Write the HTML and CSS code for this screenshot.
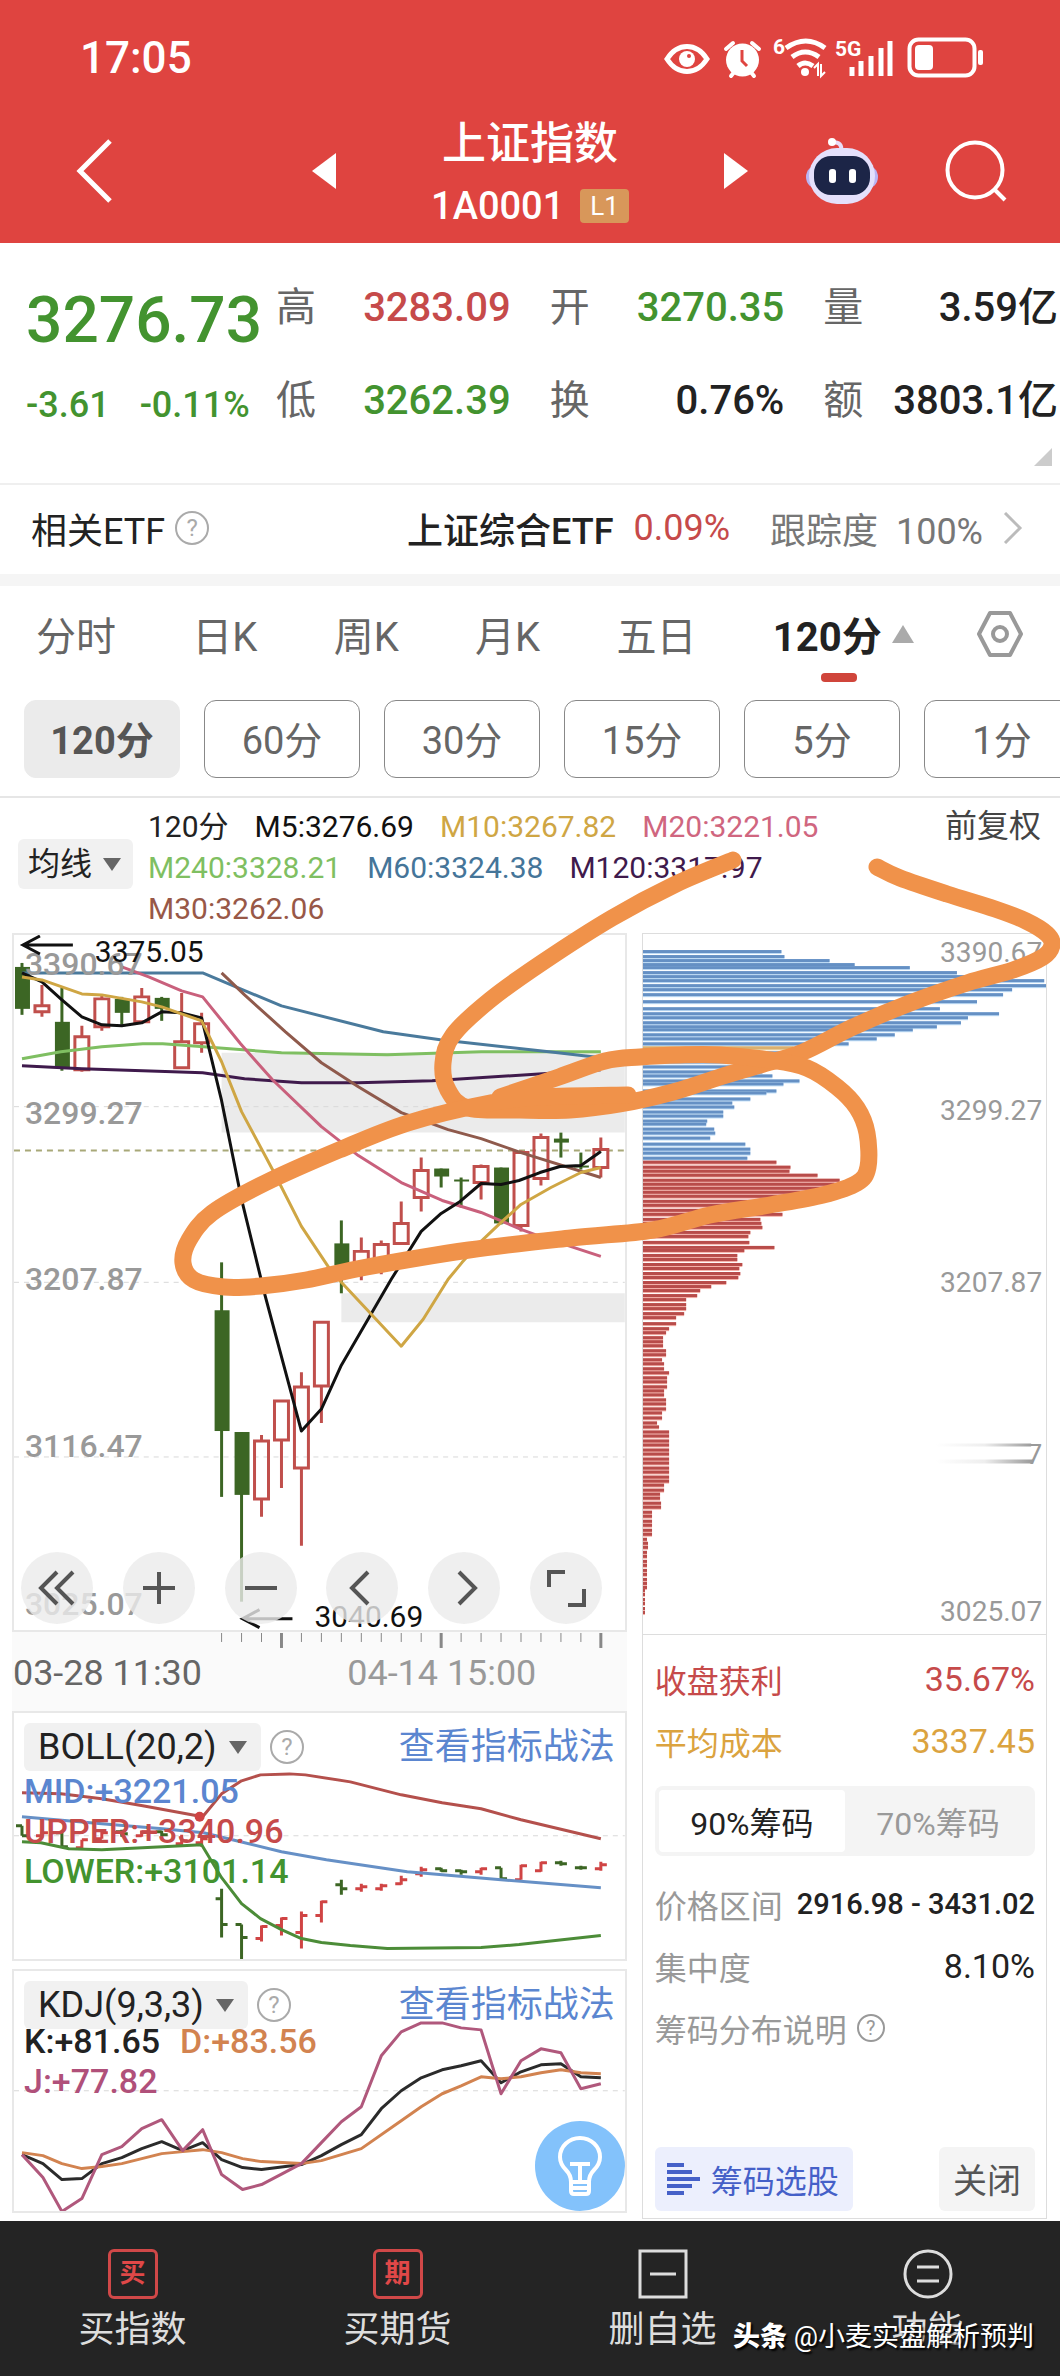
FILE: index.html
```html
<!DOCTYPE html>
<html lang="zh-CN">
<head>
    <meta charset="UTF-8">
    <meta name="viewport" content="width=device-width, initial-scale=1.0">
    <title>上证指数 1A0001</title>
    <link rel="stylesheet" href="styles.css">
</head>
<body>

    <header class="header">
        <div class="status">
            <span class="time">17:05</span>
            <svg class="status-icons" width="320" height="44" viewBox="664 36 320 44">
                <g fill="none" stroke="#fff" stroke-width="5">
                    <path d="M667 59q8-12.500 20-12.500t20 12.500q-8 12.500-20 12.500t-20-12.500z"/>
                    <path d="M726 49l7-6M759 49l-7-6M731 76l4-5M754 76l-4-5" stroke-width="4" stroke-linecap="round"/>
                </g>
                <circle cx="687" cy="59" r="8" fill="#fff"/>
                <circle cx="689" cy="56" r="2" fill="#df4440"/>
                <circle cx="742.500" cy="60" r="16.500" fill="#fff"/>
                <path d="M742 50v11l5 5" fill="none" stroke="#df4440" stroke-width="3"/>
                <text x="773" y="54" class="st-small">6</text>
                <g fill="none" stroke="#fff" stroke-width="5">
                    <path d="M786 48q20-14 39 0"/>
                    <path d="M792 57q13-10 27 0"/>
                    <path d="M798 66q7-6 15 0" />
                </g>
                <circle cx="805" cy="72" r="4" fill="#fff"/>
                <path d="M814 68l4-4v12M821 64v12l4-4" fill="none" stroke="#fff" stroke-width="2"/>
                <text x="835" y="56" class="st-small">5G</text>
                <path d="M852 67v9M861 61v15M871 56v20M881 48v28M890 41v35" stroke="#fff" stroke-width="5"/>
                <rect x="909.500" y="39.500" width="65" height="36" rx="9" fill="none" stroke="#fff" stroke-width="4"/>
                <rect x="915" y="45" width="18" height="25" rx="4" fill="#fff"/>
                <rect x="978" y="50" width="5" height="15" rx="2" fill="#fff"/>
            </svg>
        </div>
        <div class="title-row">
            <button class="icon-btn back" aria-label="返回">
                <svg width="40" height="66" viewBox="0 0 40 66"><path d="M36 3L6 33l30 30" fill="none" stroke="#fff" stroke-width="5"/></svg>
            </button>
            <div class="title-mid">
                <button class="icon-btn" aria-label="上一个"><svg width="24" height="36"><path d="M24 0v36L0 18z" fill="#fff"/></svg></button>
                <div class="title-text">
                    <h1>上证指数</h1>
                    <p>1A0001<span class="level">L1</span></p>
                </div>
                <button class="icon-btn" aria-label="下一个"><svg width="24" height="36"><path d="M0 0v36l24-18z" fill="#fff"/></svg></button>
            </div>
            <div class="title-right">
                <button class="icon-btn" aria-label="智能助手">
                    <svg width="74" height="68" viewBox="0 0 74 68">
                        <path d="M36 14q2-9-9-9" fill="none" stroke="#e9ddf8" stroke-width="4"/>
                        <circle cx="27" cy="5" r="4" fill="#fff"/>
                        <rect x="1" y="28" width="72" height="24" rx="12" fill="#b9b4f3"/>
                        <rect x="4" y="11" width="66" height="56" rx="28" fill="#e4e0fb"/>
                        <rect x="9" y="19" width="56" height="39" rx="17" fill="#1c2547"/>
                        <rect x="24" y="32" width="7" height="14" rx="3" fill="#fff"/>
                        <rect x="44" y="32" width="7" height="14" rx="3" fill="#fff"/>
                    </svg>
                </button>
                <button class="icon-btn" aria-label="搜索">
                    <svg width="62" height="62" viewBox="0 0 62 62"><g fill="none" stroke="#fff" stroke-width="4"><circle cx="30" cy="30" r="27.500"/><path d="M49 49l11 11"/></g></svg>
                </button>
            </div>
        </div>
    </header>

    <section class="quote">
        <div class="quote-main green">
            <div class="price">3276.73</div>
            <div class="change"><span>-3.61</span><span>-0.11%</span></div>
        </div>
        <div class="quote-grid">
            <div class="field"><span class="name">高</span><span class="red">3283.09</span></div>
            <div class="field"><span class="name">开</span><span class="green">3270.35</span></div>
            <div class="field"><span class="name">量</span><span>3.59亿</span></div>
            <div class="field"><span class="name">低</span><span class="green">3262.39</span></div>
            <div class="field"><span class="name">换</span><span>0.76%</span></div>
            <div class="field"><span class="name">额</span><span>3803.1亿</span></div>
        </div>
        <span class="corner"></span>
    </section>

    <section class="etf">
        <span>相关ETF</span>
        <button class="help" aria-label="说明">?</button>
        <a class="etf-link" href="#"><b>上证综合ETF</b><span class="red">0.09%</span><span class="track">跟踪度&nbsp; 100%</span>
            <svg width="20" height="32" viewBox="0 0 20 32"><path d="M2 1l15 15L2 31" fill="none" stroke="#bbb" stroke-width="3"/></svg>
        </a>
    </section>

    <nav class="tabs">
        <button>分时</button>
        <button>日K</button>
        <button>周K</button>
        <button>月K</button>
        <button>五日</button>
        <button class="on">120分<i class="up"></i></button>
        <button aria-label="设置">
            <svg width="48" height="48" viewBox="0 0 48 48"><g fill="none" stroke="#999" stroke-width="4"><path d="M14 3h20l11 21-11 21H14L3 24z" stroke-linejoin="round"/><circle cx="24" cy="24" r="7"/></g></svg>
        </button>
    </nav>

    <div class="periods">
        <button class="on">120分</button>
        <button>60分</button>
        <button>30分</button>
        <button>15分</button>
        <button>5分</button>
        <button>1分</button>
    </div>

    <main class="chart-area">
        <div class="legend">
            <label class="pick pick-ma"><select aria-label="主图指标"><option>均线</option></select></label>
            <div class="ma">
                <span>120分</span>
                <span class="m5">M5:3276.69</span>
                <span class="m10">M10:3267.82</span>
                <span class="m20">M20:3221.05</span>
                <span class="m240">M240:3328.21</span>
                <span class="m60">M60:3324.38</span>
                <span class="m120">M120:3317.97</span>
                <span class="m30">M30:3262.06</span>
            </div>
            <span class="adjust">前复权</span>
        </div>

        <div class="charts">
            <div class="left">
                <div class="panel kline">
                    <svg class="plot" viewBox="14 935 612 696">
                        <path d="M222 1053h404v80H222zM342 1294h284v29H342z" fill="#ebebeb"/>
                        <path d="M14 1107h612M14 1283h612M14 1458h612" class="grid-line"/>
                        <path d="M14 1151h612" stroke="#a8a878" stroke-width="2" stroke-dasharray="6 5"/>
                        <g id="candles"></g>
                        <g class="line">
                            <path stroke="#7fbf62" d="M22 1059L61 1052 102 1047 143 1044 163 1044 204 1047 282 1053 388 1055 482 1052 602 1052"/>
                            <path stroke="#3f1a4c" d="M22 1066L82 1069 143 1071 203 1073 245 1079 302 1083 359 1083 433 1081 559 1073 602 1070"/>
                            <path stroke="#4a7a9c" d="M22 973H203L241 989 282 1006 384 1032 441 1040 559 1053 602 1058"/>
                            <path stroke="#8f5a4c" d="M222 973L245 995 286 1032 322 1063 359 1087 402 1113 449 1130 482 1139 522 1153 602 1178"/>
                            <path stroke="#c9607c" d="M122 967L149 977 182 991 203 997 241 1044 273 1080 322 1127 359 1156 402 1183 443 1201 482 1213 522 1230 541 1237 602 1257"/>
                            <path stroke="#111" d="M22 973L42 982 62 1000 82 1017 102 1025 122 1026 142 1023 162 1012 182 1013 202 1018 222 1101 242 1200 265 1294 302 1432 322 1410 342 1366 392 1280 422 1232 442 1214 461 1202 482 1184 502 1185 520 1181 541 1173 561 1167 582 1166 602 1152"/>
                            <path stroke="#cfa644" d="M22 977L42 980 82 994 102 995 142 1002 162 1007 182 1014 202 1021 222 1062 242 1112 273 1170 302 1227 330 1269 342 1283 372 1315 402 1347 424 1320 449 1280 463 1263 482 1242 502 1223 522 1205 552 1188 582 1173 602 1168"/>
                        </g>
                        <g class="axis-text">
                            <text x="25" y="975">3390.67</text>
                            <text x="25" y="1124">3299.27</text>
                            <text x="25" y="1291">3207.87</text>
                            <text x="25" y="1458">3116.47</text>
                            <text x="25" y="1616">3025.07</text>
                        </g>
                        <g class="mark-text">
                            <text x="95" y="962">3375.05</text>
                            <text x="315" y="1628">3040.69</text>
                            <path d="M73 945H23M40 936L23 945l17 9M293 1620h-50M260 1611l-17 9 17 9"/>
                        </g>
                    </svg>
                    <div class="tools">
                        <button aria-label="收起"><svg viewBox="0 0 72 72"><path d="M36 20L20 36l16 16M52 20L36 36l16 16"/></svg></button>
                        <button aria-label="放大"><svg viewBox="0 0 72 72"><path d="M36 20v32M20 36h32"/></svg></button>
                        <button aria-label="缩小"><svg viewBox="0 0 72 72"><path d="M20 36h32"/></svg></button>
                        <button aria-label="左移"><svg viewBox="0 0 72 72"><path d="M42 20L26 36l16 16"/></svg></button>
                        <button aria-label="右移"><svg viewBox="0 0 72 72"><path d="M31 20l16 16-16 16"/></svg></button>
                        <button aria-label="全屏"><svg viewBox="0 0 72 72"><path d="M35 20H19v15M54 37v16H38"/></svg></button>
                    </div>
                </div>

                <svg class="time-axis" viewBox="12 1633 616 80">
                    <g id="ticks"></g>
                    <text x="13" y="1686" fill="#666">03-28 11:30</text>
                    <text x="348" y="1686" fill="#999">04-14 15:00</text>
                </svg>

                <div class="panel">
                    <svg class="plot" viewBox="14 1715 612 246">
                        <path d="M14 1838h612" class="grid-line"/>
                        <g id="ohlc"></g>
                        <g class="line">
                            <path stroke="#b4504c" d="M22 1795L61 1796 102 1801 143 1808 203 1819 222 1796 242 1783 261 1777 290 1776 306 1777 351 1784 402 1797 443 1805 482 1811 522 1822 602 1841"/>
                            <path stroke="#6690c6" d="M22 1819L102 1826 163 1831 204 1835 241 1844 282 1854 327 1862 408 1874 502 1882 602 1890"/>
                            <path stroke="#4c8c38" d="M22 1844L41 1845 69 1851 102 1852 163 1849 202 1847 222 1880 242 1906 261 1921 282 1932 302 1941 322 1945 351 1948 388 1951 482 1950 520 1947 602 1938"/>
                        </g>
                        <circle cx="200" cy="1819" r="5" fill="#d04444"/>
                    </svg>
                    <div class="panel-info">
                        <div class="panel-head">
                            <label class="pick"><select aria-label="副图指标一"><option>BOLL(20,2)</option></select></label>
                            <button class="help" aria-label="BOLL说明">?</button>
                            <a href="#">查看指标战法</a>
                        </div>
                        <p class="blue">MID:+3221.05</p>
                        <p class="red">UPPER:+3340.96</p>
                        <p class="green">LOWER:+3101.14</p>
                    </div>
                </div>

                <div class="panel kdj">
                    <svg class="plot" viewBox="14 1973 612 240">
                        <path d="M14 2093h612" class="grid-line"/>
                        <g class="line">
                            <path stroke="#2b2b2b" d="M22 2157L43 2166 62 2182 82 2181 102 2166 122 2160 142 2151 162 2144 183 2153 203 2145 222 2162 243 2170 262 2172 302 2167 322 2158 342 2147 362 2137 382 2111 402 2093 422 2080 443 2072 462 2068 482 2063 502 2085 522 2074 542 2067 562 2066 582 2079 602 2080"/>
                            <path stroke="#d28350" d="M22 2155L43 2158 62 2166 82 2171 102 2169 122 2166 162 2156 183 2154 203 2152 222 2155 243 2161 262 2164 283 2165 302 2166 322 2163 362 2151 402 2123 422 2109 443 2096 462 2088 482 2079 502 2081 522 2079 542 2075 562 2072 582 2075 602 2076"/>
                            <path stroke="#b0587c" d="M22 2157L43 2180 62 2214 82 2201 102 2157 122 2149 142 2131 162 2122 183 2153 203 2132 222 2177 243 2192 262 2187 283 2176 302 2166 322 2145 342 2124 362 2109 382 2058 402 2034 422 2025 443 2025 462 2030 482 2032 502 2096 522 2063 542 2051 562 2055 582 2091 602 2086"/>
                        </g>
                    </svg>
                    <div class="panel-info">
                        <div class="panel-head">
                            <label class="pick"><select aria-label="副图指标二"><option>KDJ(9,3,3)</option></select></label>
                            <button class="help" aria-label="KDJ说明">?</button>
                            <a href="#">查看指标战法</a>
                        </div>
                        <p><span class="k">K:+81.65</span><span class="d">D:+83.56</span></p>
                        <p class="j">J:+77.82</p>
                    </div>
                    <button class="bulb" aria-label="提示">
                        <svg width="44" height="60" viewBox="0 0 44 60"><g fill="none" stroke="#fff" stroke-width="4" stroke-linejoin="round"><path d="M13 46q0-7-5-12Q2 28 2 21a20 19 0 0 1 40 0q0 7-6 13-5 5-5 12v9q0 3-3 3H16q-3 0-3-3zM13 46h18M14 52h16M12 28h20M22 28v18"/></g></svg>
                    </button>
                </div>
            </div>

            <aside class="right">
                <svg class="plot chip-plot" viewBox="644 934 402 698">
                    <defs><linearGradient id="fade"><stop offset="0" stop-color="#fff"/><stop offset=".5" stop-color="#eee"/><stop offset="1" stop-color="#999"/></linearGradient></defs>
                    <g id="chips"></g>
                    <g class="chip-text">
                        <text x="1042" y="962">3390.67</text>
                        <text x="1042" y="1119">3299.27</text>
                        <text x="1042" y="1291">3207.87</text>
                        <text x="1042" y="1462">7</text>
                        <text x="1042" y="1619">3025.07</text>
                    </g>
                    <path d="M936 1442h95v3h-95zM936 1458h97v4h-97z" fill="url(#fade)"/>
                </svg>
                <div class="chip-info">
                    <div class="row red"><span>收盘获利</span><span class="num">35.67%</span></div>
                    <div class="row gold"><span>平均成本</span><span class="num">3337.45</span></div>
                    <div class="switch">
                        <button class="on">90%筹码</button>
                        <button>70%筹码</button>
                    </div>
                    <div class="row"><span>价格区间</span><b class="range">2916.98 - 3431.02</b></div>
                    <div class="row"><span>集中度</span><span class="num dark">8.10%</span></div>
                    <div class="row row-help"><span>筹码分布说明</span><button class="help help-s" aria-label="筹码说明">?</button></div>
                    <div class="chip-btns">
                        <button class="pick-stock"><svg width="34" height="32" viewBox="0 0 34 32"><path d="M0 2h17M0 9h25M0 16h33M0 23h25M0 30h17" stroke="#4560c8" stroke-width="4"/></svg>筹码选股</button>
                        <button class="close">关闭</button>
                    </div>
                </div>
            </aside>
        </div>

        <!-- 手绘标注 -->
        <svg class="draw" viewBox="0 798 1060 1425">
            <g id="strokes" fill="none" stroke="#f0924a" stroke-width="17" stroke-linecap="round" stroke-linejoin="round"></g>
        </svg>
    </main>

    <footer class="bottom">
        <a href="#"><span class="box">买</span>买指数</a>
        <a href="#"><span class="box">期</span>买期货</a>
        <a href="#"><svg width="50" height="50" viewBox="0 0 50 50"><path d="M2 2h46v46H2zM12 25h26" fill="none" stroke="#ddd" stroke-width="3"/></svg>删自选</a>
        <a href="#"><svg width="50" height="50" viewBox="0 0 50 50"><g fill="none" stroke="#ddd" stroke-width="3"><circle cx="25" cy="25" r="23"/><path d="M14 18h22M14 32h22"/></g></svg>功能</a>
        <div class="author"><b>头条</b> @小麦实盘解析预判</div>
    </footer>

    <script src="script.js"></script>
</body>
</html>
```
FILE: styles.css
```css
* {
    box-sizing: border-box;
    margin: 0;
    padding: 0;
}

body {
    background: #fff;
    color: #222;
    font-family: Roboto, "Noto Sans CJK SC", sans-serif;
    font-size: 36px;
    overflow-x: hidden;
}

button, select {
    font: inherit;
    color: inherit;
    border: 0;
    background: none;
}

a {
    color: inherit;
    text-decoration: none;
}

svg {
    display: block;
}

b {
    font-weight: 500;
}

.red { color: #c64a4a; }
.green { color: #43932f; }
.blue { color: #5b86d0; }
.gold { color: #dba33f; }

/* 顶部 */
.header {
    background: #df4440;
    color: #fff;
}

.status {
    height: 98px;
    padding: 18px 76px 0 80px;
    display: flex;
    align-items: center;
    justify-content: space-between;
}

.status-icons {
    overflow: visible;
}

.time {
    font-size: 44px;
    font-weight: 500;
}

.st-small {
    font-size: 21px;
    font-weight: 700;
    fill: #fff;
}

.title-row {
    height: 145px;
    display: grid;
    grid-template-columns: 1fr 436px 1fr;
    align-items: center;
}

.icon-btn {
    flex: none;
}

.back {
    justify-self: start;
    margin-left: 74px;
}

.title-mid {
    display: flex;
    align-items: center;
    justify-content: space-between;
}

.title-text {
    text-align: center;
}

.title-text h1 {
    font-size: 44px;
    font-weight: 500;
    line-height: 60px;
}

.title-text p {
    display: flex;
    align-items: center;
    gap: 16px;
    margin-top: 10px;
    font-size: 38px;
    font-weight: 500;
    line-height: 44px;
}

.level {
    padding: 0 10px;
    background: #d8975a;
    border-radius: 4px;
    font-size: 26px;
    font-weight: 400;
    line-height: 34px;
}

.title-right {
    display: flex;
    align-items: center;
    justify-content: flex-end;
    gap: 66px;
    padding-right: 53px;
}

/* 行情 */
.quote {
    position: relative;
    display: flex;
    height: 242px;
    padding: 34px 2px 0 26px;
    border-bottom: 2px solid #efefef;
}

.quote-main {
    width: 250px;
    flex: none;
    font-weight: 500;
}

.price {
    font-size: 64px;
    line-height: 88px;
}

.change {
    display: flex;
    gap: 30px;
    margin-top: 16px;
    line-height: 48px;
}

.quote-grid {
    flex: 1;
    display: grid;
    grid-template-columns: repeat(3, 1fr);
    grid-auto-rows: 60px;
    gap: 33px 39px;
    font-size: 40px;
    font-weight: 500;
    line-height: 62px;
}

.field {
    display: flex;
    justify-content: space-between;
    white-space: nowrap;
}

.name {
    color: #666;
    font-weight: 400;
}

.corner {
    position: absolute;
    right: 8px;
    bottom: 17px;
    border-left: 18px solid transparent;
    border-bottom: 18px solid #ccc;
}

.etf {
    display: flex;
    align-items: center;
    height: 101px;
    padding: 0 37px 4px 31px;
    border-bottom: 12px solid #f5f5f5;
}

.help {
    width: 34px;
    height: 34px;
    margin-left: 10px;
    border: 2px solid #aaa;
    border-radius: 50%;
    color: #aaa;
    font-size: 24px;
    line-height: 28px;
    flex: none;
}

.etf-link {
    flex: 1;
    display: flex;
    align-items: center;
    justify-content: flex-end;
    gap: 20px;
}

.track {
    margin-left: 20px;
    color: #777;
}

/* 周期 */
.tabs {
    display: flex;
    align-items: center;
    justify-content: space-between;
    height: 96px;
    padding: 0 36px;
    color: #666;
    font-size: 40px;
}

.tabs button {
    position: relative;
    height: 96px;
}

.tabs .on {
    display: flex;
    align-items: center;
    gap: 10px;
    margin-right: -14px;
    color: #222;
    font-weight: 700;
}

.tabs .on::after {
    content: "";
    position: absolute;
    left: 48px;
    bottom: 0;
    width: 36px;
    height: 9px;
    border-radius: 4px;
    background: #d0453b;
}

.up {
    border: 11px solid transparent;
    border-top: 0;
    border-bottom: 18px solid #aaa;
}

.periods {
    display: flex;
    gap: 24px;
    padding: 18px 0 18px 24px;
    border-bottom: 2px solid #e6e6e6;
    overflow: hidden;
}

.periods button {
    flex: 0 0 156px;
    height: 78px;
    padding-bottom: 4px;
    border: 1px solid #888;
    border-radius: 12px;
    color: #666;
    font-size: 38px;
}

.periods .on {
    border-color: #ebebeb;
    background: #ebebeb;
    color: #555;
    font-weight: 700;
}

/* 图表 */
.chart-area {
    position: relative;
}

.legend {
    display: flex;
    align-items: flex-start;
    height: 135px;
    padding: 8px 19px 0 18px;
    font-size: 30px;
    line-height: 41px;
}

.pick {
    position: relative;
    flex: none;
    border-radius: 6px;
    background: #f1f1f1;
}

.pick::after {
    content: "";
    position: absolute;
    right: 14px;
    top: 50%;
    margin-top: -6px;
    border: 9px solid transparent;
    border-bottom: 0;
    border-top: 13px solid #666;
    pointer-events: none;
}

.pick select {
    appearance: none;
    display: block;
    height: 48px;
    padding: 0 44px 0 14px;
}

.pick-ma {
    margin-top: 33px;
}

.pick-ma::after {
    right: 12px;
}

.pick-ma select {
    height: 50px;
    padding: 0 40px 0 10px;
    font-size: 32px;
}

.ma {
    display: flex;
    flex-wrap: wrap;
    flex: 0 1 680px;
    column-gap: 26px;
    margin-left: 15px;
    align-content: flex-start;
}

.m5 { color: #111; }
.m10 { color: #cfa644; }
.m20 { color: #d0667f; }
.m240 { color: #7fbf62; }
.m60 { color: #457599; }
.m120 { color: #3f1a4c; }
.m30 { color: #985847; }

.adjust {
    margin-left: auto;
    color: #444;
    font-size: 32px;
}

.charts {
    display: flex;
    gap: 15px;
    padding: 0 13px 0 12px;
}

.left {
    flex: 616 1 0;
    min-width: 0;
    padding-bottom: 8px;
}

.right {
    flex: 404 1 0;
    min-width: 0;
    display: flex;
    flex-direction: column;
    margin-bottom: 2px;
    border: 1px solid #ddd;
}

.panel {
    position: relative;
    display: grid;
    border: 2px solid #e8e8e8;
}

.panel > .plot,
.panel > .panel-info {
    grid-area: 1 / 1;
    min-width: 0;
}

.plot {
    width: 100%;
}

.kdj {
    margin-top: 8px;
}

.grid-line {
    stroke: #d8d8d8;
    stroke-width: 1;
    stroke-dasharray: 5 5;
}

.line {
    fill: none;
    stroke-width: 3;
    stroke-linejoin: round;
}

.axis-text {
    fill: #999;
    font-size: 32px;
    font-weight: 500;
}

.mark-text {
    fill: #111;
    font-size: 30px;
}

.mark-text path {
    fill: none;
    stroke: #111;
    stroke-width: 3;
}

.tools {
    position: absolute;
    left: 7px;
    right: 23px;
    bottom: 6px;
    display: flex;
    justify-content: space-between;
}

.tools button {
    width: 72px;
    height: 72px;
    border-radius: 50%;
    background: rgba(235, 235, 235, .8);
}

.tools path {
    fill: none;
    stroke: #555;
    stroke-width: 4;
}

.time-axis {
    width: 100%;
    background: #fafafa;
    font-size: 36px;
}

.panel-head {
    display: flex;
    align-items: center;
    margin: 10px 10px 0 0;
    height: 48px;
}

.panel-head .help {
    margin-left: 9px;
}

.panel-head a {
    margin-left: auto;
    color: #5b86d0;
}

.panel-info {
    padding-left: 10px;
    font-size: 34px;
    line-height: 40px;
}

.panel-info p {
    font-weight: 500;
}

.kdj .panel-head {
    margin-bottom: -8px;
}

.panel-head .pick,
.panel-head a {
    font-size: 36px;
}

.k { margin-right: 20px; }
.d { color: #d28350; }
.j { color: #b0507a; }

.bulb {
    position: absolute;
    right: 0;
    bottom: 0;
    width: 90px;
    height: 90px;
    border-radius: 50%;
    background: #83c2fb;
}

.bulb svg {
    margin: 0 auto;
}

/* 筹码 */
.chip-plot {
    border-bottom: 1px solid #ddd;
}

.chip-text {
    fill: #999;
    font-size: 28px;
    text-anchor: end;
}

.chip-info {
    flex: 1;
    display: flex;
    flex-direction: column;
    padding: 13px 11px 7px 12px;
    font-size: 32px;
}

.row {
    display: flex;
    align-items: center;
    justify-content: space-between;
    height: 62px;
    color: #999;
    white-space: nowrap;
}

.row.red { color: #c64a4a; }
.row.gold { color: #dba33f; }

.num {
    font-size: 34px;
}

.dark {
    color: #222;
}

.range {
    color: #222;
    font-size: 29px;
}

.row-help {
    justify-content: flex-start;
}

.help-s {
    width: 28px;
    height: 28px;
    border-color: #999;
    color: #999;
    font-size: 20px;
    line-height: 22px;
}

.switch {
    display: flex;
    margin: 14px 0 17px;
    padding: 4px;
    border-radius: 8px;
    background: #f4f4f4;
}

.switch button {
    flex: 1;
    height: 62px;
    border-radius: 4px;
    color: #999;
}

.switch .on {
    background: #fff;
    color: #222;
}

.chip-btns {
    display: flex;
    justify-content: space-between;
    margin-top: auto;
}

.chip-btns button {
    height: 64px;
    border-radius: 6px;
}

.pick-stock {
    display: flex;
    align-items: center;
    gap: 10px;
    padding: 0 14px 0 12px;
    background: #eceffd;
    color: #4560c8;
}

.close {
    padding: 0 14px;
    background: #f4f4f4;
    color: #555;
    font-size: 34px;
}

.draw {
    position: absolute;
    left: 0;
    top: 0;
    width: 100%;
    pointer-events: none;
}

/* 底部 */
.bottom {
    position: relative;
    display: flex;
    height: 155px;
    background: #242424;
    color: #ddd;
}

.bottom a {
    flex: 1;
    display: flex;
    flex-direction: column;
    align-items: center;
    gap: 4px;
    padding-top: 28px;
    line-height: 54px;
}

.box {
    width: 50px;
    height: 50px;
    border: 3px solid #d04848;
    border-radius: 6px;
    color: #e04848;
    font-size: 26px;
    font-weight: 700;
    line-height: 42px;
    text-align: center;
}

.author {
    position: absolute;
    right: 26px;
    bottom: 19px;
    color: #fff;
    font-size: 27px;
    line-height: 40px;
    text-shadow: 2px 2px 2px #000;
}

.author b {
    font-weight: 900;
}
```
FILE: script.js
```js
const RED = '#c04f4c'
const GREEN = '#3c6624'

// [最高, 实体上沿, 实体下沿, 最低, 涨跌]
const candles = [
    [963, 967, 1009, 1015, 0], [985, 1006, 1012, 1017, 1], [988, 1022, 1068, 1071, 0],
    [1026, 1037, 1070, 1072, 1], [995, 999, 1027, 1031, 1], [997, 999, 1013, 1025, 0],
    [988, 997, 1022, 1023, 1], [997, 998, 1009, 1021, 0], [993, 1042, 1068, 1069, 1],
    [1013, 1024, 1043, 1053, 1], [1263, 1311, 1432, 1498, 0], [1433, 1433, 1496, 1603, 0],
    [1436, 1442, 1500, 1518, 1], [1401, 1402, 1441, 1489, 1], [1373, 1388, 1469, 1547, 1],
    [1323, 1323, 1387, 1424, 1], [1221, 1244, 1266, 1294, 0], [1238, 1252, 1267, 1281, 1],
    [1241, 1245, 1267, 1275, 1], [1202, 1224, 1244, 1244, 1], [1158, 1171, 1198, 1212, 1],
    [1169, 1169, 1177, 1188, 0], [1178, 1180, 1182, 1208, 0], [1165, 1167, 1183, 1200, 1],
    [1168, 1168, 1224, 1225, 0], [1151, 1153, 1226, 1232, 1], [1134, 1138, 1179, 1186, 1],
    [1133, 1139, 1143, 1158, 0], [1153, 1166, 1168, 1170, 0], [1138, 1150, 1168, 1178, 1]
]

let tag = ''
candles.forEach(([high, top, bottom, low, up], i) => {
    const x = 22 + i * 20
    if (up) {
        tag += `<path d="M${x} ${high}V${top}M${x} ${bottom}V${low}M${x - 7} ${top}h14V${bottom}h-14z" fill="none" stroke="${RED}" stroke-width="3"/>`
    } else {
        tag += `<path d="M${x} ${high}V${low}" stroke="${GREEN}" stroke-width="3"/>`
        tag += `<rect x="${x - 7}" y="${top}" width="15" height="${bottom - top}" fill="${GREEN}"/>`
    }
})
document.querySelector('#candles').innerHTML = tag

// [序号, 最高, 最低, 开, 收, 涨跌]
const ohlc = [
    [0, 1828, 1838, 1828, 1838, 0], [1, 1834, 1840, 1838, 1835, 1], [2, 1833, 1850, 1835, 1849, 0],
    [3, 1842, 1851, 1850, 1842, 1], [4, 1833, 1841, 1841, 1835, 1], [5, 1832, 1839, 1834, 1836, 0],
    [6, 1833, 1839, 1838, 1834, 1], [7, 1833, 1839, 1834, 1837, 0], [8, 1837, 1849, 1846, 1843, 1],
    [9, 1838, 1849, 1845, 1841, 1], [10, 1891, 1940, 1901, 1927, 0], [11, 1927, 1962, 1927, 1940, 0],
    [12, 1928, 1944, 1941, 1929, 1], [13, 1920, 1938, 1928, 1921, 1], [14, 1914, 1951, 1935, 1918, 1],
    [15, 1903, 1925, 1918, 1904, 1], [16, 1882, 1897, 1887, 1891, 0], [17, 1886, 1894, 1891, 1889, 1],
    [18, 1886, 1893, 1891, 1888, 1], [19, 1878, 1887, 1886, 1882, 1], [20, 1869, 1879, 1876, 1872, 1],
    [21, 1870, 1874, 1871, 1873, 0], [22, 1872, 1877, 1873, 1874, 0], [23, 1870, 1877, 1874, 1871, 1],
    [24, 1870, 1882, 1870, 1881, 0], [25, 1867, 1882, 1882, 1868, 1], [26, 1864, 1874, 1873, 1865, 1],
    [27, 1863, 1868, 1865, 1866, 0], [28, 1868, 1872, 1870, 1870, 0], [29, 1864, 1873, 1871, 1867, 1]
]

tag = ''
ohlc.forEach(([i, high, low, open, close, up]) => {
    const x = 22 + i * 20
    tag += `<path d="M${x} ${high}V${low}M${x - 6} ${open}h6M${x} ${close}h6" fill="none" stroke="${up ? '#d04444' : GREEN}" stroke-width="3"/>`
})
document.querySelector('#ohlc').innerHTML = tag

// 时间刻度
tag = ''
for (let x = 222; x <= 602; x += 20) {
    const big = [282, 442, 602].includes(x)
    tag += `<path d="M${x} 1634v${big ? 15 : 9}" stroke="#888" stroke-width="${big ? 3 : 1}"/>`
}
document.querySelector('#ticks').innerHTML = tag

// 筹码分布 [y, 长度]
const blueChips = [
    [951, 138], [956, 141], [960, 186], [964, 211], [967, 266], [972, 313], [976, 339], [980, 400],
    [985, 402], [989, 368], [994, 359], [1001, 333], [1008, 296], [1013, 355], [1017, 324], [1022, 317],
    [1026, 293], [1029, 269], [1034, 251], [1038, 233], [1043, 205], [1052, 143], [1057, 136], [1061, 130],
    [1066, 126], [1071, 119], [1075, 129], [1080, 156], [1083, 140], [1090, 133], [1092, 123], [1098, 107],
    [1102, 89], [1106, 91], [1111, 80], [1115, 80], [1120, 64], [1123, 63], [1128, 71], [1132, 72],
    [1137, 67], [1143, 102], [1148, 107], [1152, 107], [1157, 104]
]
const redChips = [
    [1161, 133], [1166, 147], [1170, 146], [1174, 174], [1179, 196], [1183, 191], [1187, 180], [1191, 176],
    [1195, 163], [1200, 149], [1204, 136], [1209, 126], [1213, 139], [1218, 117], [1222, 118], [1226, 119],
    [1231, 107], [1235, 105], [1241, 106], [1246, 131], [1249, 101], [1254, 94], [1258, 94], [1263, 99],
    [1267, 96], [1272, 97], [1276, 95], [1281, 83], [1285, 68], [1289, 57], [1294, 54], [1298, 43],
    [1303, 43], [1307, 43], [1312, 41], [1316, 33], [1322, 33], [1327, 26], [1331, 23], [1336, 20],
    [1340, 20], [1344, 20], [1349, 23], [1353, 23], [1358, 19], [1362, 21], [1367, 21], [1371, 26],
    [1376, 24], [1380, 24], [1385, 24], [1389, 21], [1393, 21], [1398, 23], [1402, 23], [1407, 23],
    [1411, 19], [1416, 19], [1421, 14], [1425, 16], [1430, 26], [1434, 26], [1439, 26], [1443, 26],
    [1448, 26], [1452, 26], [1457, 26], [1461, 26], [1466, 26], [1470, 26], [1475, 26], [1479, 26],
    [1483, 21], [1488, 21], [1492, 17], [1496, 17], [1501, 18], [1505, 18], [1510, 9], [1514, 9],
    [1519, 9], [1523, 9], [1528, 9], [1532, 9], [1537, 4], [1541, 5], [1545, 5], [1550, 4],
    [1554, 4], [1559, 4], [1563, 4], [1568, 4], [1572, 4], [1577, 4], [1581, 4], [1585, 4],
    [1588, 2], [1592, 2], [1597, 2], [1601, 2], [1606, 2], [1610, 2]
]

function chip(y, len, color, light) {
    return `<rect x="644" y="${y - 1}" width="${len}" height="4" fill="${light}"/>`
        + `<rect x="644" y="${y - 1}" width="${len}" height="3" fill="${color}"/>`
}
tag = ''
blueChips.forEach(([y, len]) => tag += chip(y, len, '#6590c4', '#c4e0f8'))
redChips.forEach(([y, len]) => tag += chip(y, len, '#b84c4a', '#f6b4ac'))
tag += chip(1047, 150, '#d8b070', '#f0dcb0')
document.querySelector('#chips').innerHTML = tag

// 把点连成平滑曲线
function smooth(p) {
    let d = `M${p[0]}`
    for (let i = 0; i < p.length - 1; i++) {
        const a = p[i - 1] || p[i], b = p[i], c = p[i + 1], e = p[i + 2] || c
        d += `C${b[0] + (c[0] - a[0]) / 6} ${b[1] + (c[1] - a[1]) / 6} ${c[0] - (e[0] - b[0]) / 6} ${c[1] - (e[1] - b[1]) / 6} ${c}`
    }
    return d
}

const strokes = [
    [[733, 860], [676, 884], [612, 918], [543, 962], [490, 1000], [453, 1035], [443, 1063], [448, 1090],
     [468, 1108], [520, 1110], [570, 1110], [620, 1104], [673, 1092], [720, 1077], [760, 1065], [803, 1052],
     [853, 1027], [910, 1003], [967, 983], [1013, 970], [1043, 957], [1052, 945], [1047, 934], [1026, 921],
     [995, 909], [947, 894], [900, 878], [877, 867]],
    [[500, 1097], [559, 1077], [605, 1061], [640, 1057], [680, 1055], [720, 1055], [770, 1060], [807, 1068],
     [837, 1087], [857, 1108], [867, 1133], [868, 1167], [857, 1183], [823, 1195], [770, 1205], [710, 1215],
     [653, 1230], [571, 1238], [469, 1250], [367, 1267], [306, 1280], [261, 1286], [224, 1287], [194, 1280],
     [183, 1263], [189, 1240], [212, 1213], [265, 1183], [339, 1150], [408, 1123], [490, 1103], [543, 1097],
     [628, 1095]]
]
document.querySelector('#strokes').innerHTML = strokes.map(p => `<path d="${smooth(p)}"/>`).join('')
```
